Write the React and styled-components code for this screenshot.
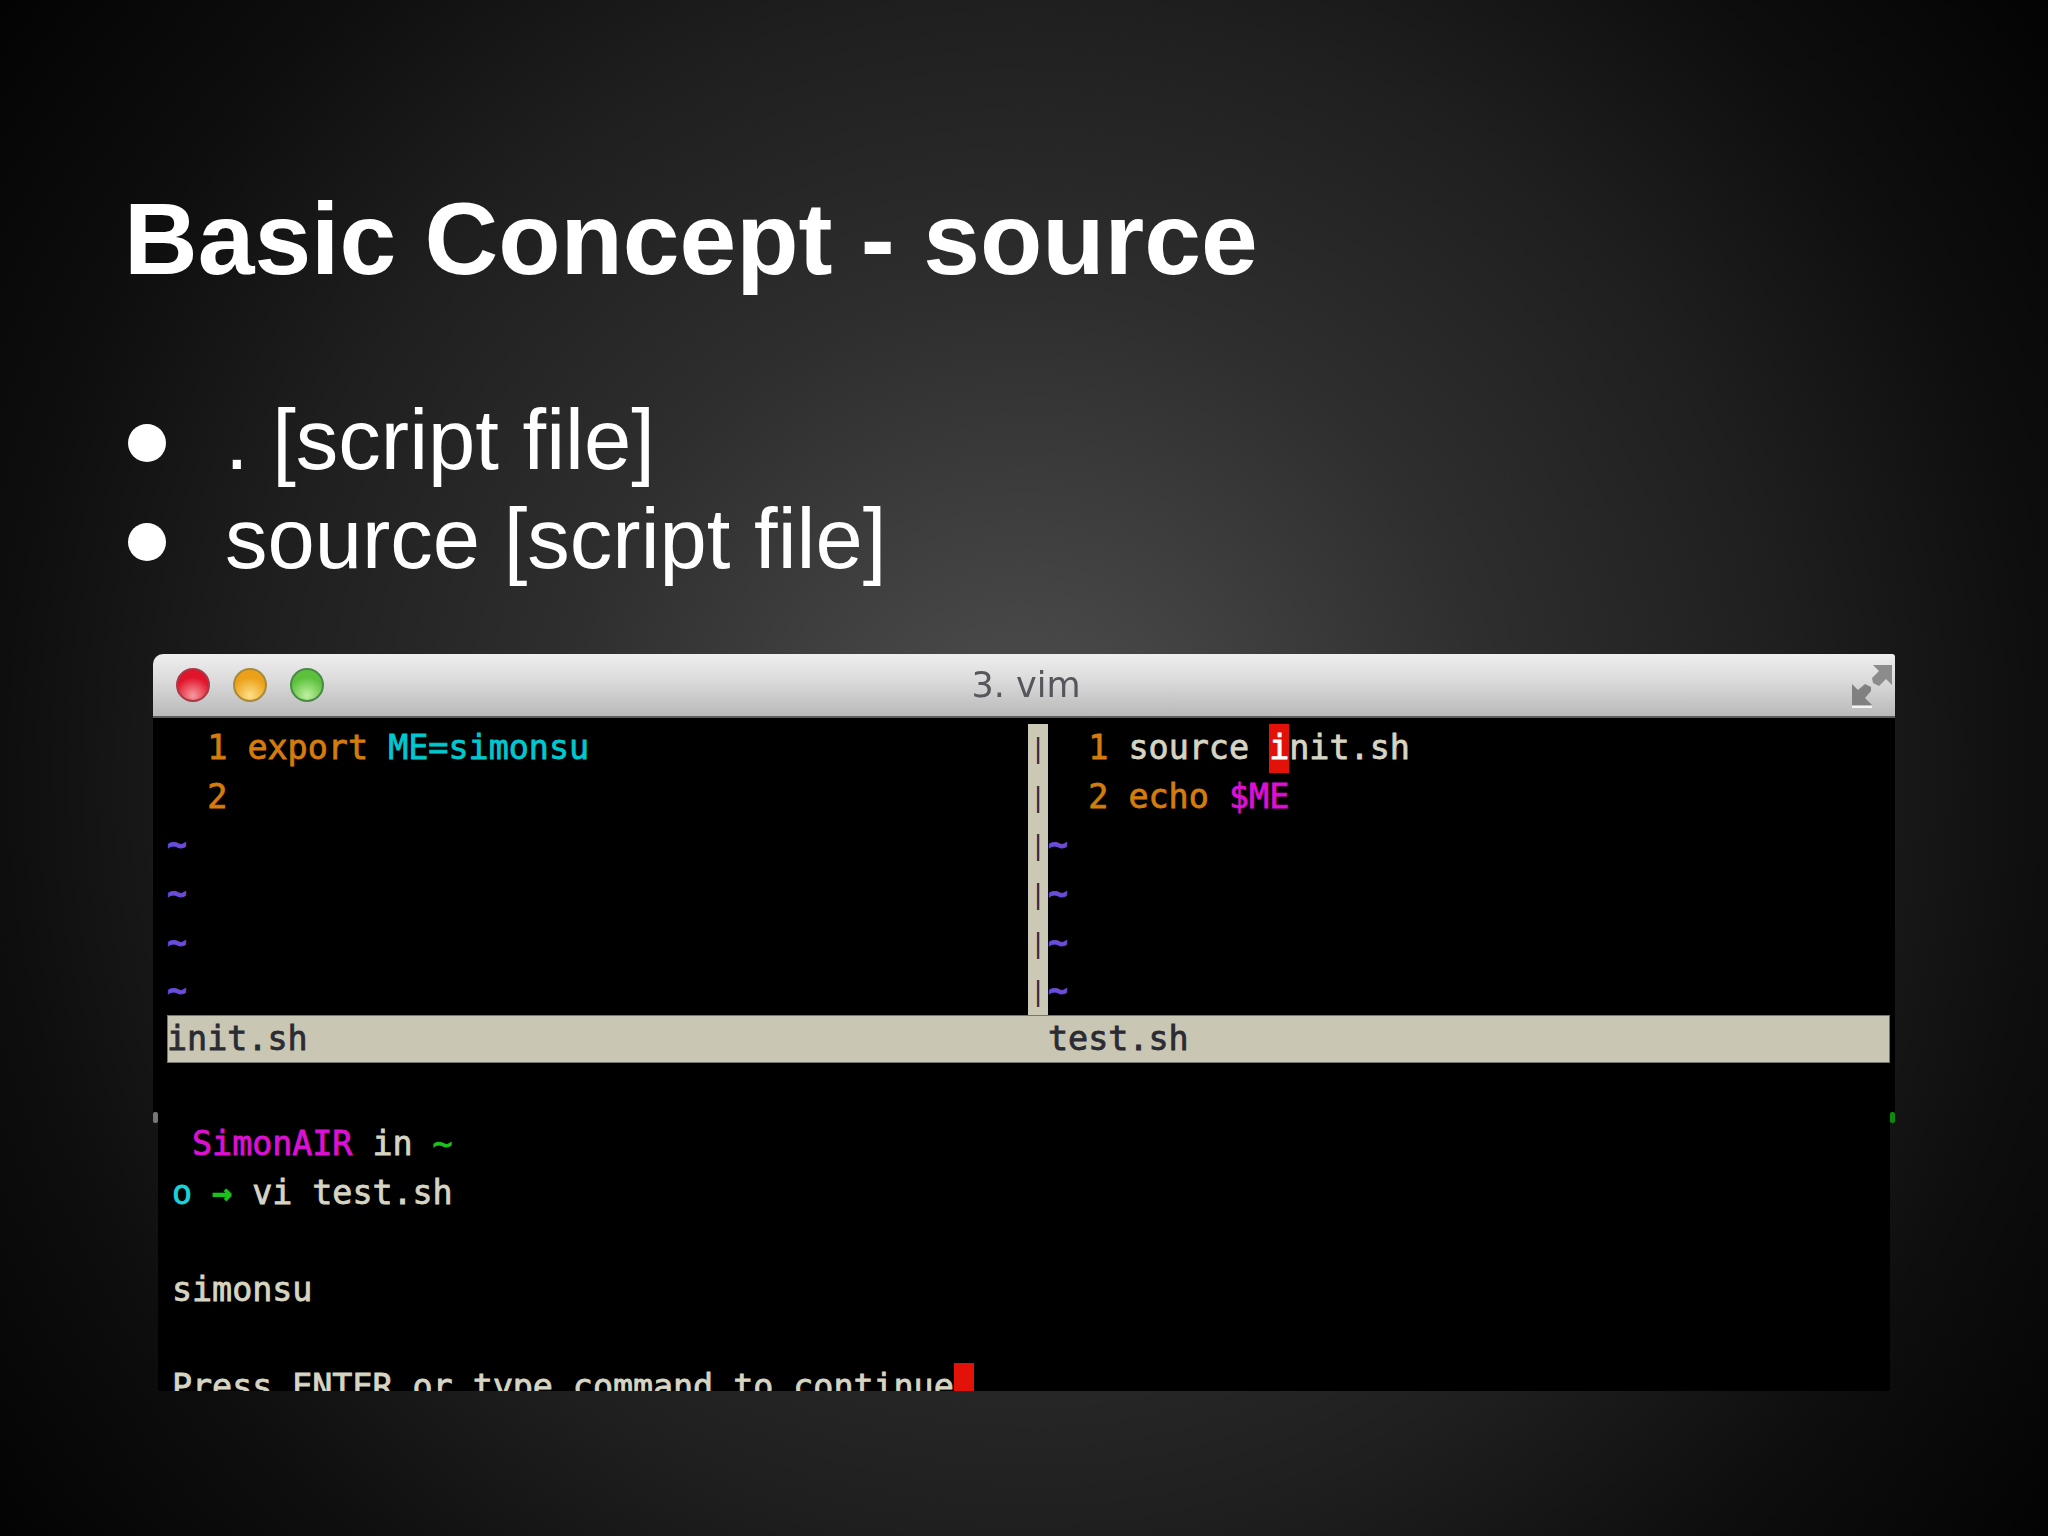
import React from "react";
import styled, { createGlobalStyle } from "styled-components";

const GlobalStyle = createGlobalStyle`
    html, body {
        margin: 0;
        padding: 0;
        background: #000;
    }
`;

const ROW = 48.7;

const Slide = styled.div`
    width: 2048px;
    height: 1536px;
    overflow: hidden;
    padding-top: 180px;
    box-sizing: border-box;
    background: radial-gradient(
        circle 1280px at 1024px 768px,
        #505050 0%,
        #484848 9%,
        #2e2e2e 37%,
        #1f1f1f 60%,
        #0e0e0e 80%,
        #030303 100%
    );
    font-family: "Liberation Sans", Arial, sans-serif;
    color: #fff;
`;

const Title = styled.h1`
    margin: 0 0 0 124px;
    font-size: 102px;
    line-height: 118px;
    font-weight: 700;
`;

const Bullets = styled.ul`
    list-style: none;
    margin: 92px 0 0 128px;
    padding: 0;
`;

const Bullet = styled.li`
    display: flex;
    align-items: center;
    gap: 59px;
    height: 99px;
    font-size: 85px;
    &::before {
        content: "";
        width: 38px;
        height: 38px;
        margin-top: 6px;
        border-radius: 50%;
        background: #fff;
        flex: none;
    }
`;

const Window = styled.div`
    position: relative;
    width: 1742px;
    margin: 66px 0 0 153px;
    filter: blur(0.7px);
    font-family: "DejaVu Sans Mono", "Liberation Mono", monospace;
    font-size: 33.4px;
    color: #d6d4c2;
    -webkit-text-stroke: 0.8px currentColor;
`;

const TitleBar = styled.div`
    position: relative;
    height: 62px;
    border-radius: 10px 3px 0 0;
    border-bottom: 2px solid #5c5c5c;
    background: linear-gradient(#eeeeee 0%, #dcdcdc 40%, #b9b9b9 100%);
    display: flex;
    align-items: center;
    justify-content: center;
    -webkit-text-stroke: 0;
`;

const Lights = styled.div`
    position: absolute;
    left: 23px;
    top: 14px;
    display: flex;
    gap: 23px;
`;

const Light = styled.span`
    width: 34px;
    height: 34px;
    border-radius: 50%;
    box-sizing: border-box;
    border: 2px solid ${(p) => p.$edge};
    background: radial-gradient(circle at 50% 85%, ${(p) => p.$glow} 0%, ${(p) => p.$base} 62%);
`;

const WindowName = styled.span`
    font-family: "DejaVu Sans", sans-serif;
    font-size: 35px;
    color: #56565c;
    margin-left: 4px;
`;

const Expand = styled.svg`
    position: absolute;
    right: 1px;
    top: 9px;
    width: 44px;
    height: 46px;
`;

const VimArea = styled.div`
    background: #000;
    height: 395px;
    box-sizing: border-box;
    padding: 6px 5px 0 14px;
`;

const Panes = styled.div`
    display: flex;
    height: 291px;
`;

const Pane = styled.div`
    width: ${(p) => p.$width}px;
    flex: none;
`;

const Divider = styled.div`
    width: 20px;
    flex: none;
    background: #cbc9b5;
    color: #3a2a40;
    font-size: 26px;
    text-align: center;
    overflow: hidden;
    -webkit-text-stroke: 0;
`;

const Row = styled.div`
    height: ${ROW}px;
    line-height: ${ROW}px;
    white-space: pre;
`;

const Token = styled.span`
    color: ${(p) => p.$color};
    font-weight: ${(p) => (p.$bold ? 700 : 400)};
`;

const Cursor = styled.span`
    display: inline-block;
    height: ${ROW}px;
    width: 20.1px;
    vertical-align: top;
    background: #e21208;
    color: #fff;
`;

const StatusBar = styled.div`
    display: flex;
    height: 48px;
    line-height: 48px;
    background: #c9c7b3;
    box-shadow: inset 0 0 0 1px #77766a;
    color: #2b2b33;
`;

const StatusName = styled.span`
    width: ${(p) => p.$width}px;
    flex: none;
`;

const Shell = styled.div`
    height: 278px;
    margin: 0 5px;
    padding: 7px 0 0 14px;
    box-sizing: border-box;
    background: #000;
    overflow: hidden;
    letter-spacing: -0.06px;
`;

const Speck = styled.i`
    position: absolute;
    top: 458px;
    width: 5px;
    height: 11px;
    left: ${(p) => p.$left}px;
    background: ${(p) => p.$color};
    border-radius: 2px;
`;

const ORANGE = "#d47c0c";
const CYAN = "#00c8d0";
const PINK = "#dc10d4";
const GREEN = "#1cc31c";
const TILDE = "#6a4cd8";

const Tildes = () =>
    [0, 1, 2, 3].map((i) => (
        <Row key={i}>
            <Token $color={TILDE} $bold>~</Token>
        </Row>
    ));

const App = () => {
    return (
        <Slide>
            <GlobalStyle />
            <Title>Basic Concept - source</Title>
            <Bullets>
                <Bullet>. [script file]</Bullet>
                <Bullet>source [script file]</Bullet>
            </Bullets>
            <Window>
                <TitleBar>
                    <Lights>
                        <Light $base="#e0142a" $glow="#f79aa0" $edge="#a83a48" />
                        <Light $base="#eba018" $glow="#fde08a" $edge="#a88a3c" />
                        <Light $base="#5cc03c" $glow="#c0f0a0" $edge="#4a8a48" />
                    </Lights>
                    <WindowName>3. vim</WindowName>
                    <Expand viewBox="0 0 44 46">
                        <path
                            d="M23 2 H42 V22 L36 16 L29 23 L23 20 L22 15 L29 8 Z"
                            fill="#8c8c8c"
                        />
                        <path
                            d="M2 21 L8 27 L15 21 L21 24 L21 28 L15 35 L22 42 H2 Z"
                            fill="#808080"
                        />
                        <rect x="2" y="43" width="20" height="2" fill="#f4f4f4" />
                    </Expand>
                </TitleBar>
                <VimArea>
                    <Panes>
                        <Pane $width={861}>
                            <Row>
                                <Token $color={ORANGE}>  1 export </Token>
                                <Token $color={CYAN}>ME=simonsu</Token>
                            </Row>
                            <Row>
                                <Token $color={ORANGE}>  2</Token>
                            </Row>
                            <Tildes />
                        </Pane>
                        <Divider>
                            {[0, 1, 2, 3, 4, 5].map((i) => (
                                <Row key={i}>|</Row>
                            ))}
                        </Divider>
                        <Pane $width={840}>
                            <Row>
                                <Token $color={ORANGE}>  1 </Token>
                                source <Cursor>i</Cursor>nit.sh
                            </Row>
                            <Row>
                                <Token $color={ORANGE}>  2 echo </Token>
                                <Token $color={PINK}>$ME</Token>
                            </Row>
                            <Tildes />
                        </Pane>
                    </Panes>
                    <StatusBar>
                        <StatusName $width={881}>init.sh</StatusName>
                        <StatusName $width={300}>test.sh</StatusName>
                    </StatusBar>
                </VimArea>
                <Shell>
                    <Row>
                        <Token $color={PINK}> SimonAIR</Token> in <Token $color={GREEN}>~</Token>
                    </Row>
                    <Row>
                        <Token $color="#19d3dc">o</Token> <Token $color={GREEN} $bold>→</Token> vi test.sh
                    </Row>
                    <Row />
                    <Row>simonsu</Row>
                    <Row />
                    <Row>
                        Press ENTER or type command to continue<Cursor />
                    </Row>
                </Shell>
                <Speck $left={0} $color="#777" />
                <Speck $left={1737} $color="#0c8a0c" />
            </Window>
        </Slide>
    );
};

export default App;
